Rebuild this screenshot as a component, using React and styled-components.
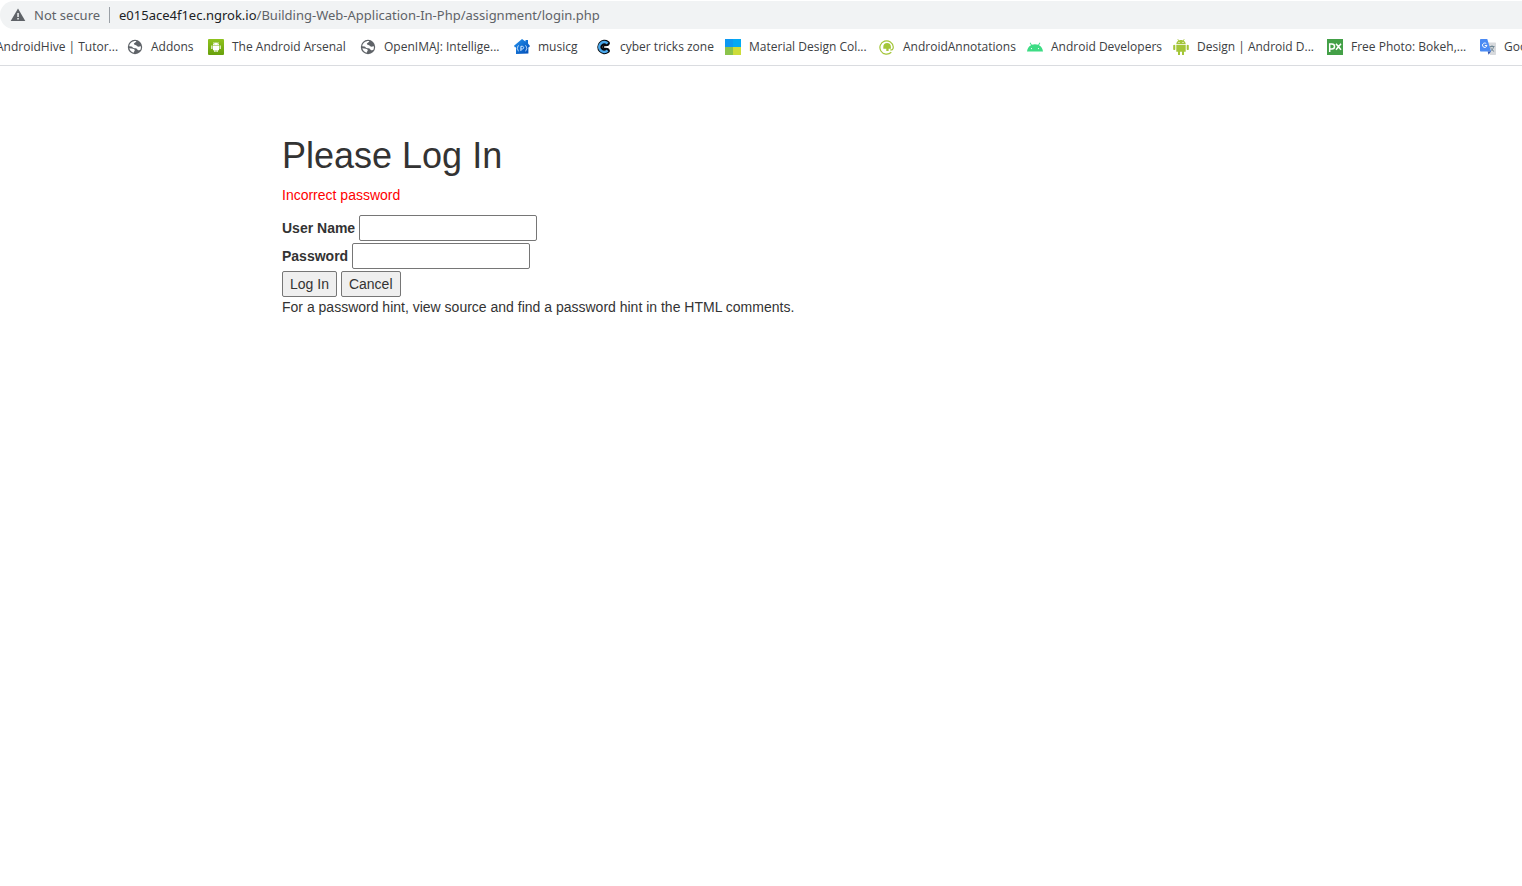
import React from "react";
import styled, { createGlobalStyle } from "styled-components";

const Global = createGlobalStyle`
  * { box-sizing: border-box; }
  body { margin: 0; background: #fff; color: #333; font: 14px/20px "Liberation Sans", Arial, sans-serif; }
`;

const Chrome = styled.header`
  padding-top: 1px;
  border-bottom: 1px solid #dadce0;
  overflow: hidden;
  font-family: "Open Sans", "Noto Sans", sans-serif;
`;

const AddressBar = styled.div`
  display: flex;
  align-items: center;
  height: 28px;
  padding-left: 10px;
  border-radius: 14px 0 0 14px;
  background: #f1f3f4;
  color: #5f6368;
  font-family: "Noto Sans", "Open Sans", sans-serif;
  font-size: 13px;
  white-space: nowrap;
`;

const Security = styled.span`
  width: 83px;
  padding-left: 8px;
`;

const Divider = styled.span`
  width: 1px;
  height: 16px;
  margin-right: 9px;
  background: #9aa0a6;
`;

const Host = styled.span`
  color: #202124;
`;

const Bookmarks = styled.nav`
  display: flex;
  align-items: center;
  height: 36px;
`;

const Bookmark = styled.a`
  display: flex;
  flex: none;
  align-items: center;
  gap: 8px;
  width: ${(p) => p.$width}px;
  color: #3c4043;
  font-size: 12px;
  line-height: 16px;
  text-decoration: none;
  white-space: nowrap;

  svg { flex: none; }
`;

const LeadBookmark = styled(Bookmark)`
  margin-left: -4px;
`;

const Main = styled.main`
  max-width: 958px;
  margin: 70px auto 0;
`;

const Title = styled.h1`
  margin: 0 0 9px;
  font-size: 36px;
  line-height: 40px;
  font-weight: 500;
`;

const ErrorText = styled.p`
  margin: 0 0 10px;
  color: red;
`;

const Form = styled.form`
  display: flex;
  flex-direction: column;
  gap: 2px;
`;

const Row = styled.div`
  display: flex;
  align-items: center;
  gap: 4px;
`;

const Label = styled.label`
  font-weight: 700;
`;

const Input = styled.input`
  width: 178px;
  height: 26px;
  padding: 1px 2px;
  border: 1px solid #767676;
  border-radius: 2px;
  background: #fff;
  font: inherit;
`;

const Button = styled.button`
  height: 26px;
  padding: 0 7px;
  border: 1px solid #767676;
  border-radius: 2px;
  background: #efefef;
  color: #333;
  font: inherit;
`;

const Hint = styled.p`
  margin: 0;
`;

const Icon = ({ children }) => (
  <svg width="16" height="16" viewBox="0 0 16 16" aria-hidden="true">{children}</svg>
);

const Warning = () => (
  <Icon>
    <path d="M8 1.500 15.300 14H.7z" fill="#5f6368" />
    <path d="M7.300 6h1.500v4H7.300zM7.300 11h1.500v1.500H7.300z" fill="#f1f3f4" />
  </Icon>
);

const Globe = () => (
  <Icon>
    <circle cx="8" cy="8" r="7.200" fill="#5f6368" />
    <path d="M9.300 2.100C9.300 3.500 8 3.600 7.200 4.200 6.300 5 7.300 5.800 8.500 6c1.600.3 1.600 1.700 3 1.700.8 0 1.400-.6 2.300-.4.3 1.500 0 2.700-.6 3.800-1.100.3-2.300.1-2.900-.7C9.700 9.500 9 9.400 7.700 9.300 5.500 9.100 5.800 7.600 4.300 7.400L2.200 7.200C2.700 4 5.600 1.700 9.300 2.100z" fill="#fff" />
    <path d="M2.300 9.300c1.700 0 3.300.3 4.500.8 1 .5 1.300 1.500.5 2.200l-.7 1.400C4.300 13 2.800 11.500 2.300 9.300z" fill="#fff" />
  </Icon>
);

const Arsenal = () => (
  <Icon>
    <defs>
      <linearGradient id="arsenal" x2="0" y2="1">
        <stop stopColor="#8fc31f" />
        <stop offset="1" stopColor="#67a00b" />
      </linearGradient>
    </defs>
    <rect width="16" height="16" rx="1" fill="url(#arsenal)" />
    <path d="M5 6c0-3.300 6-3.300 6 0zM5 6.500h6v4.700H9.700V13H8.500v-1.800h-1V13H6.300v-1.800H5zM3.300 6.500h1.100v3.600H3.300zM11.600 6.500h1.100v3.600h-1.100z" fill="#fff" />
    <path d="m5.500 3 1 1.400M10.500 3l-1 1.400" stroke="#fff" strokeWidth=".6" />
    <path d="M6.300 4.700h.8v.6h-.8zM8.900 4.700h.8v.6h-.8z" fill="#79ad16" />
  </Icon>
);

const House = () => (
  <Icon>
    <defs>
      <linearGradient id="house" x2="1" y2="1">
        <stop stopColor="#2492ee" />
        <stop offset="1" stopColor="#004bb5" />
      </linearGradient>
    </defs>
    <path d="M8 0 11.500 2.500V1H14V4.500L16 7l-1 1.300h-.6V14.500L2 15V8.300H.8L0 6.800z" fill="url(#house)" />
    <path d="M4.600 6.500c-1 0-.6 2.200-1.500 2.700.9.500.5 2.800 1.500 2.800M11.500 6.500c1 0 .6 2.200 1.500 2.700-.9.500-.5 2.800-1.500 2.800M6.900 12V7.300h1.300c2 0 2 2.700 0 2.700H6.900" fill="none" stroke="#d5e9ff" strokeWidth="1" />
  </Icon>
);

const Cyber = () => (
  <Icon>
    <path d="M11.200 4.300A4.600 4.600 0 1 0 11.200 11.700" fill="none" stroke="#070b10" strokeWidth="5.200" strokeLinecap="round" />
    <path d="M11.600 4.500A4.900 4.900 0 1 0 11.600 11.500" fill="none" stroke="#4ba9ec" strokeWidth="2.500" />
    <path d="M10.600 7A1.800 1.800 0 1 0 10.600 9" fill="none" stroke="#070b10" strokeWidth="1.700" />
  </Icon>
);

const Palette = () => (
  <Icon>
    <path d="M0 0h8v8H0z" fill="#0d98f2" />
    <path d="M8 0h8v8H8z" fill="#03a9f4" />
    <path d="M0 8h8v8H0z" fill="#8bc34a" />
    <path d="M8 8h8v8H8z" fill="#cddc39" />
  </Icon>
);

const Annotations = () => (
  <Icon>
    <path d="M12.300 13.300A6.700 6.700 0 1 1 14.300 8c0 2.400-1.400 3.500-3 2.700" fill="none" stroke="#a4c639" strokeWidth="1.200" />
    <path d="M4.300 8.100c0-2.400 1.500-4 3.800-4s3.800 1.600 3.800 4v1.700H9.600v2.200H7.300V9.800h-3z" fill="#a4c639" />
  </Icon>
);

const AndroidHead = () => (
  <Icon>
    <path d="M0 12.400C.3 9.600 1.700 7.500 4 6.200L2.700 4l.7-.4L4.800 5.800a8.400 8.400 0 0 1 6.400 0l1.400-2.200.7.400L12 6.200c2.300 1.300 3.700 3.400 4 6.200z" fill="#3ddc84" />
    <circle cx="4.500" cy="9.600" r=".6" fill="#fff" />
    <circle cx="11.500" cy="9.600" r=".6" fill="#fff" />
  </Icon>
);

const AndroidRobot = () => (
  <Icon>
    <path d="M3.300 5c.1-1.600.9-2.700 2-3.300L4.400.4l.6-.4 1 1.400c1.200-.5 2.800-.5 4 0L11 0l.6.4-.9 1.300c1.100.6 1.900 1.700 2 3.300zM3.300 5.700h9.400v7H11V16H9v-3.300H7V16H5v-3.300H3.300zM.2 6.300Q1.200 5 2.300 6.300v4.200q-1 1-2.100 0zM13.700 6.300q1-1.300 2.100 0v4.200q-1 1-2.100 0z" fill="#a4c639" />
    <path d="M5.500 3h1v1h-1zM9.500 3h1v1h-1z" fill="#fff" />
  </Icon>
);

const Pexels = () => (
  <Icon>
    <path d="M0 0h16v16H0z" fill="#43a047" />
    <path d="M2.700 13V5h2.200c3.500 0 3.500 5 0 5H2.700M9 4.700l5 6M14 4.700l-5 6" fill="none" stroke="#fff" strokeWidth="1.500" />
  </Icon>
);

const Translate = () => (
  <Icon>
    <path d="M7 3.500h8.300q.7 0 .7.700v11.100q0 .7-.7.700H10z" fill="#d8dadd" />
    <path d="M9.500 7.500h5M12 6.300v1.200M13.600 7.800c-.5 2-1.800 3.700-3.600 4.600M10.700 8.500c.6 1.700 1.700 3 3.400 3.900" fill="none" stroke="#67808d" strokeWidth=".9" />
    <path d="M.8 0h6.500L11 12.500H.8Q0 12.500 0 11.700V.8Q0 0 .8 0z" fill="#4b8bf4" />
    <path d="M7.700 12.500H11L8.500 15.700z" fill="#3457b2" />
    <path d="M6.300 4.700A2.200 2.200 0 1 0 6.900 6.500H4.800" fill="none" stroke="#fff" strokeWidth="1" />
  </Icon>
);

const bookmarks = [
  ["Addons", Globe, 81],
  ["The Android Arsenal", Arsenal, 152],
  ["OpenIMAJ: Intellige...", Globe, 154],
  ["musicg", House, 82],
  ["cyber tricks zone", Cyber, 129],
  ["Material Design Col...", Palette, 154],
  ["AndroidAnnotations", Annotations, 148],
  ["Android Developers", AndroidHead, 146],
  ["Design | Android D...", AndroidRobot, 154],
  ["Free Photo: Bokeh,...", Pexels, 153],
  ["Google Translate", Translate, 153],
];

export default function App() {
  return (
    <>
      <Global />
      <Chrome>
        <AddressBar>
          <Warning />
          <Security>Not secure</Security>
          <Divider />
          <Host>e015ace4f1ec.ngrok.io</Host>
          <span>/Building-Web-Application-In-Php/assignment/login.php</span>
        </AddressBar>
        <Bookmarks aria-label="Bookmarks">
          <LeadBookmark href="#" $width={131}>AndroidHive | Tutor...</LeadBookmark>
          {bookmarks.map(([name, Glyph, width]) => (
            <Bookmark key={name} href="#" $width={width}>
              <Glyph />
              {name}
            </Bookmark>
          ))}
        </Bookmarks>
      </Chrome>
      <Main>
        <Title>Please Log In</Title>
        <ErrorText role="alert">Incorrect password</ErrorText>
        <Form onSubmit={(e) => e.preventDefault()}>
          <Row>
            <Label htmlFor="user">User Name</Label>
            <Input id="user" type="text" />
          </Row>
          <Row>
            <Label htmlFor="pass">Password</Label>
            <Input id="pass" type="password" />
          </Row>
          <Row>
            <Button type="submit">Log In</Button>
            <Button type="button">Cancel</Button>
          </Row>
        </Form>
        <Hint>For a password hint, view source and find a password hint in the HTML comments.</Hint>
      </Main>
    </>
  );
}
